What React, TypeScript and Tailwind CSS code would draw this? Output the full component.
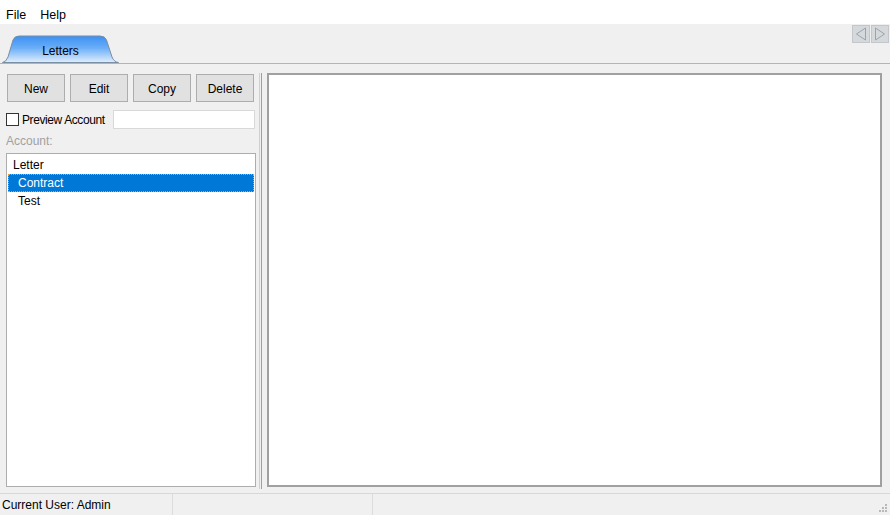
import React from 'react';

function Tab({ label }: { label: string }) {
  return (
    <div className="relative w-[117px] h-[28px] flex items-center justify-center">
      <svg className="absolute inset-0" width="117" height="28" viewBox="0 0 117 28">
        <defs>
          <linearGradient id="tabg" x1="0" y1="0" x2="0" y2="1">
            <stop offset="0" stopColor="#3a90f4" />
            <stop offset="0.45" stopColor="#6aaef7" />
            <stop offset="1" stopColor="#e2eefb" />
          </linearGradient>
        </defs>
        <path d="M0.5 27.5 Q4 27 6 22 L11 5 Q12.5 1 17 1 L98 1 Q103 1 104.5 5 L110 22 Q112 27 116.5 27.5 Z" fill="url(#tabg)" stroke="#7a8ea4" strokeWidth="1" />
      </svg>
      <span className="relative text-[12px] text-black pt-[4px]">{label}</span>
    </div>
  );
}

function Btn({ label }: { label: string }) {
  return (
    <button className="w-[58px] h-[28px] bg-[#e1e1e1] border border-[#adadad] text-[12px] text-black pt-[2px]">
      {label}
    </button>
  );
}

export default function App() {
  return (
    <div className="w-[890px] h-[515px] flex flex-col bg-[#f0f0f0] font-['Segoe_UI','Liberation_Sans',sans-serif] text-[12px] overflow-hidden select-none">
      <div className="h-[24px] bg-white flex items-center gap-[14px] pl-[6px] pt-[6px] text-[12.5px] text-black shrink-0">
        <span>File</span>
        <span>Help</span>
      </div>

      <div className="h-[40px] flex items-end justify-between border-b border-[#a9b6c4] shrink-0 relative">
        <div className="pl-[2px]">
          <Tab label="Letters" />
        </div>
        <div className="absolute right-[1px] top-[1px] flex gap-[1px]">
          <div className="w-[18px] h-[18px] bg-[#d6d9dc] border border-[#c3c7cb] flex items-center justify-center">
            <svg width="12" height="14" viewBox="0 0 12 14">
              <path d="M10.5 1 L1.5 7 L10.5 13 Z" fill="none" stroke="#9ca3aa" strokeWidth="1" />
            </svg>
          </div>
          <div className="w-[18px] h-[18px] bg-[#d6d9dc] border border-[#c3c7cb] flex items-center justify-center">
            <svg width="12" height="14" viewBox="0 0 12 14">
              <path d="M1.5 1 L10.5 7 L1.5 13 Z" fill="none" stroke="#9ca3aa" strokeWidth="1" />
            </svg>
          </div>
        </div>
      </div>

      <div className="flex-1 flex min-h-0 pt-[10px] pb-[4px]">
        <div className="w-[256px] pl-[7px] flex flex-col shrink-0">
          <div className="flex gap-[5px] pr-[1px]">
            <Btn label="New" />
            <Btn label="Edit" />
            <Btn label="Copy" />
            <Btn label="Delete" />
          </div>
          <div className="flex items-center mt-[8px] h-[19px] -ml-[1px] pr-[1px]">
            <span className="w-[13px] h-[13px] border border-[#333] bg-white shrink-0" />
            <span className="ml-[3px] text-black whitespace-nowrap tracking-[-0.4px]">Preview Account</span>
            <div className="ml-auto w-[142px] h-[19px] bg-white border border-[#d9d9d9] shrink-0" />
          </div>
          <div className="mt-[3px] text-[#a0a0a0] -ml-[1px] h-[18px] leading-[18px]">Account:</div>
          <div className="flex-1 mt-[3px] -ml-[1px] bg-white border border-[#adadad] pt-[2px] px-[1px] mb-[2px]">
            <div className="h-[18px] leading-[18px] pl-[5px] text-black">Letter</div>
            <div className="h-[18px] leading-[16px] pl-[9px] bg-[#0078d7] text-white border border-dotted border-[#f59a23]">Contract</div>
            <div className="h-[18px] leading-[18px] pl-[10px] text-black">Test</div>
          </div>
        </div>

        <div className="w-[11px] flex justify-center gap-[1px] shrink-0 ml-[-1px] mr-[1px] -mt-[1px]">
          <div className="w-[1px] bg-[#d0d0d0]" />
          <div className="w-[1px] bg-[#a0a0a0]" />
        </div>

        <div className="flex-1 mr-[8px] mb-[2px] -mt-[1px] bg-white border-2 border-[#a0a0a0]" />
      </div>

      <div className="h-[22px] border-t border-[#d7d7d7] flex items-center shrink-0 relative">
        <div className="w-[173px] pl-[2px] pt-[1px] text-black border-r border-[#dcdcdc] h-full flex items-center">Current User: Admin</div>
        <div className="w-[200px] border-r border-[#dcdcdc] h-full" />
        <div className="flex-1" />
        <svg className="absolute right-[2px] bottom-[2px]" width="10" height="10" viewBox="0 0 10 10">
          <rect x="7" y="1" width="2" height="2" fill="#b8b8b8" />
          <rect x="4" y="4" width="2" height="2" fill="#b8b8b8" />
          <rect x="7" y="4" width="2" height="2" fill="#b8b8b8" />
          <rect x="1" y="7" width="2" height="2" fill="#b8b8b8" />
          <rect x="4" y="7" width="2" height="2" fill="#b8b8b8" />
          <rect x="7" y="7" width="2" height="2" fill="#b8b8b8" />
        </svg>
      </div>
    </div>
  );
}
